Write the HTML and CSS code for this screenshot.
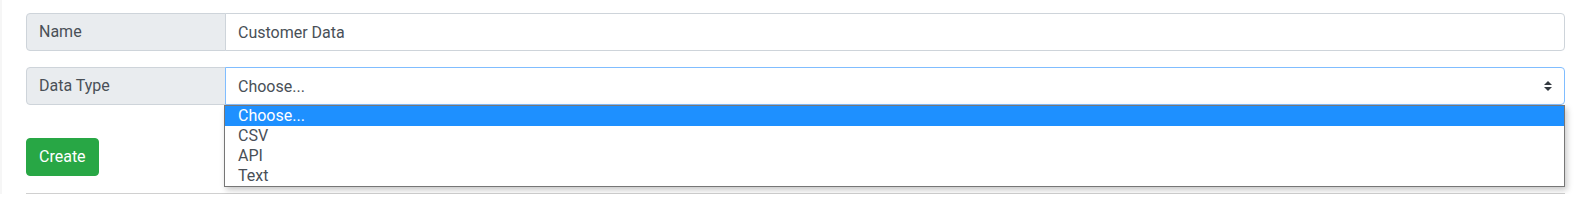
FILE: index.html
```html
<!DOCTYPE html>
<html lang="en">
<head>
<meta charset="utf-8">
<title>Create Data Source</title>
<link rel="stylesheet" href="styles.css">
</head>
<body>
<div class="page">
  <form class="form">
    <div class="input-group">
      <span class="group-label">Name</span>
      <input class="field" type="text" value="Customer Data">
    </div>
    <div class="input-group has-menu">
      <span class="group-label">Data Type</span>
      <div class="field select focused">
        <span>Choose...</span>
        <svg class="select-arrows" width="8" height="10" viewBox="0 0 4 5"><path fill="#343a40" d="M2 0L0 2h4zm0 5L0 3h4z"/></svg>
      </div>
      <ul class="select-menu">
        <li class="option selected">Choose...</li>
        <li class="option">CSV</li>
        <li class="option">API</li>
        <li class="option">Text</li>
      </ul>
    </div>
    <button class="btn-create" type="button">Create</button>
  </form>
  <hr class="divider">
</div>
</body>
</html>
```

FILE: styles.css
```css
* { box-sizing: border-box; }

html, body {
  margin: 0;
  background: #fff;
  overflow: hidden;
}

body {
  font-family: Roboto, "Liberation Sans", Arial, sans-serif;
  font-size: 16px;
  color: #495057;
}

.page {
  border-left: 2px solid #f6f6f6;
  padding: 13px 14px 0 24px;
}

.form {
  display: flex;
  flex-direction: column;
  align-items: flex-start;
}

.input-group {
  display: flex;
  width: 100%;
  height: 38px;
  margin-bottom: 16px;
}

.has-menu {
  position: relative;
}

.group-label {
  flex: 0 0 200px;
  display: flex;
  align-items: center;
  padding: 0 12px;
  background: #e9ecef;
  border: 1px solid #ced4da;
  border-radius: 4px 0 0 4px;
  color: #495057;
  line-height: 24px;
}

.field {
  flex: 1 1 auto;
  min-width: 0;
  margin-left: -1px;
  height: 38px;
  padding: 0 12px;
  border: 1px solid #ced4da;
  border-radius: 0 4px 4px 0;
  font: inherit;
  color: #495057;
  background: #fff;
  outline: none;
}

.select {
  display: flex;
  align-items: center;
  justify-content: space-between;
}

.focused {
  border-color: #80bdff;
}

.select-arrows {
  display: block;
}

.select-menu {
  position: absolute;
  top: 38px;
  left: 198px;
  right: 0;
  margin: 0;
  padding: 0;
  list-style: none;
  background: #fff;
  border: 1px solid #767676;
  box-shadow: 2px 3px 6px rgba(0, 0, 0, 0.22);
  z-index: 5;
}

.option {
  height: 20px;
  line-height: 20px;
  padding-left: 13px;
  color: #495057;
}

.option.selected {
  background: #1e90ff;
  color: #fff;
}

.btn-create {
  margin-top: 17px;
  height: 38px;
  padding: 0 12px;
  border: 1px solid #28a745;
  border-radius: 4px;
  background: #28a745;
  color: #fff;
  font: inherit;
  line-height: 24px;
}

.divider {
  margin: 17px 0 0;
  border: 0;
  border-top: 1px solid #d0d0d0;
  height: 0;
}
```
